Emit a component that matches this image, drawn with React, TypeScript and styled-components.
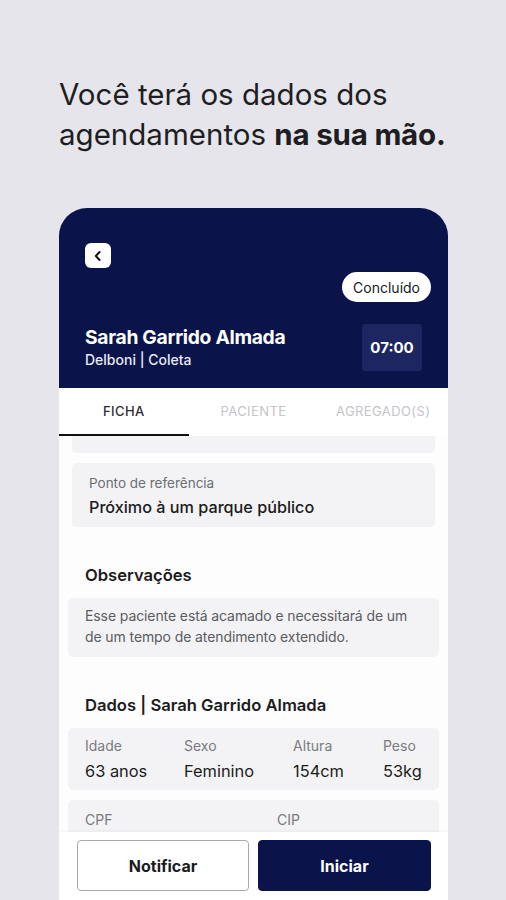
import React from "react";
import styled, { createGlobalStyle } from "styled-components";

const Global = createGlobalStyle`
  html, body { margin: 0; padding: 0; overflow: hidden; background: #e5e5eb; }
  body { font-family: Inter, "Noto Sans", Arial, sans-serif; -webkit-font-smoothing: antialiased; }
  * { box-sizing: border-box; }
`;

const Page = styled.div`
  width: 506px;
  height: 900px;
  background: #e5e5eb;
  padding: 74px 0 0 59px;
  overflow: hidden;
`;

const Headline = styled.h1`
  margin: 0;
  font-family: Inter, "Noto Sans", sans-serif;
  font-weight: 400;
  font-size: 29.5px;
  line-height: 40px;
  letter-spacing: 0px;
  color: #1e1e22;
  b { font-weight: 700; letter-spacing: -0.2px; }
`;

const Phone = styled.div`
  margin-top: 54px;
  width: 389px;
  height: 692px;
  border-radius: 28px 28px 0 0;
  background: #fdfdfd;
  overflow: hidden;
  display: flex;
  flex-direction: column;
`;

const Header = styled.div`
  height: 180px;
  flex: none;
  background: #0b144a;
  padding: 35px 17px 0 26px;
  display: flex;
  flex-direction: column;
`;

const BackButton = styled.div`
  width: 26px;
  height: 25px;
  border-radius: 6px;
  background: #fff;
  display: flex;
  align-items: center;
  justify-content: center;
`;

const StatusRow = styled.div`
  display: flex;
  justify-content: flex-end;
  margin-top: 4px;
`;

const Pill = styled.div`
  height: 30px;
  padding: 0 11px;
  border-radius: 15px;
  background: #fff;
  color: #1a1a24;
  font-size: 14px;
  display: flex;
  align-items: center;
`;

const InfoRow = styled.div`
  display: flex;
  align-items: center;
  justify-content: space-between;
  margin-top: 22px;
  padding-right: 9px;
`;

const Name = styled.div`
  color: #fff;
  font-weight: 700;
  font-size: 19.3px;
  letter-spacing: -0.3px;
  line-height: 22px;
`;

const Sub = styled.div`
  color: #e8e9f2;
  font-weight: 500;
  font-size: 14px;
  line-height: 20px;
  margin-top: 2px;
`;

const TimeBox = styled.div`
  width: 60px;
  height: 47px;
  border-radius: 3px;
  background: #1d2660;
  color: #fff;
  font-weight: 700;
  font-size: 15px;
  display: flex;
  align-items: center;
  justify-content: center;
`;

const Tabs = styled.div`
  height: 48px;
  flex: none;
  background: #fff;
  display: grid;
  grid-template-columns: repeat(3, 1fr);
`;

const Tab = styled.div<{ $active?: boolean }>`
  display: flex;
  align-items: center;
  justify-content: center;
  font-size: 13px;
  font-weight: ${(p) => (p.$active ? 500 : 400)};
  letter-spacing: 0.4px;
  color: ${(p) => (p.$active ? "#2d2d33" : "#c4c4c9")};
  border-bottom: 2px solid ${(p) => (p.$active ? "#111" : "transparent")};
`;

const Content = styled.div`
  flex: 1;
  min-height: 0;
  overflow: hidden;
  display: flex;
  flex-direction: column;
  & > * { flex: none; }
`;

const Box = styled.div<{ $inset: number }>`
  margin: 0 ${(p) => p.$inset}px;
  background: #f3f3f5;
  border-radius: 5px;
`;

const Stub = styled(Box)`
  height: 17px;
  border-radius: 0 0 5px 5px;
`;

const RefBox = styled(Box)`
  margin-top: 10px;
  height: 64px;
  padding: 11px 17px 0;
`;

const Label = styled.div`
  font-size: 13.5px;
  color: #6d6d74;
  line-height: 18px;
`;

const Value = styled.div`
  font-size: 16.2px;
  color: #1b1b20;
  line-height: 24px;
  margin-top: 3px;
  font-weight: 500;
`;

const SectionTitle = styled.div<{ $top: number }>`
  margin: ${(p) => p.$top}px 0 0 26px;
  font-weight: 600;
  font-size: 16.6px;
  line-height: 22px;
  color: #1b1b20;
`;

const ObsBox = styled(Box)`
  margin-top: 12px;
  height: 59px;
  padding: 7px 17px 0;
  font-size: 14px;
  line-height: 21px;
  color: #5b5b62;
  letter-spacing: -0.1px;
`;

const StatsBox = styled(Box)`
  margin-top: 12px;
  height: 62px;
  padding: 9px 17px 0;
  display: grid;
  grid-template-columns: 99px 109px 90px auto;
`;

const StatLabel = styled.div`
  font-size: 14px;
  color: #7a7a80;
  line-height: 18px;
`;

const StatValue = styled.div`
  font-size: 16.4px;
  color: #1b1b20;
  line-height: 22px;
  margin-top: 5px;
`;

const IdBox = styled(Box)`
  margin-top: 10px;
  height: 60px;
  padding: 11px 17px 0;
  display: grid;
  grid-template-columns: 192px auto;
`;

const Footer = styled.div`
  flex: none;
  height: 68px;
  background: #fff;
  padding: 8px 17px 0 18px;
  display: grid;
  grid-template-columns: 172px 173px;
  column-gap: 9px;
  align-items: start;
  box-shadow: 0 -1px 3px rgba(0, 0, 0, 0.04);
`;

const Button = styled.div<{ $primary?: boolean }>`
  height: 51px;
  border-radius: 4px;
  display: flex;
  align-items: center;
  justify-content: center;
  font-weight: 700;
  font-size: 16px;
  color: ${(p) => (p.$primary ? "#fff" : "#1a1a22")};
  background: ${(p) => (p.$primary ? "#0b144a" : "#fff")};
  border: 1px solid ${(p) => (p.$primary ? "#0b144a" : "#a9a9ae")};
`;

export default function App() {
  return (
    <Page>
      <Global />
      <Headline>
        Você terá os dados dos
        <br />
        agendamentos <b>na sua mão.</b>
      </Headline>
      <Phone>
        <Header>
          <BackButton>
            <svg width="14" height="14" viewBox="0 0 14 14">
              <path d="M8.6 3 L4.8 7 L8.6 11" fill="none" stroke="#111" strokeWidth="1.9" strokeLinecap="round" strokeLinejoin="round" />
            </svg>
          </BackButton>
          <StatusRow>
            <Pill>Concluído</Pill>
          </StatusRow>
          <InfoRow>
            <div>
              <Name>Sarah Garrido Almada</Name>
              <Sub>Delboni | Coleta</Sub>
            </div>
            <TimeBox>07:00</TimeBox>
          </InfoRow>
        </Header>
        <Tabs>
          <Tab $active>FICHA</Tab>
          <Tab>PACIENTE</Tab>
          <Tab>AGREGADO(S)</Tab>
        </Tabs>
        <Content>
          <Stub $inset={13} />
          <RefBox $inset={13}>
            <Label>Ponto de referência</Label>
            <Value>Próximo à um parque público</Value>
          </RefBox>
          <SectionTitle $top={37}>Observações</SectionTitle>
          <ObsBox $inset={9}>
            Esse paciente está acamado e necessitará de um
            <br />
            de um tempo de atendimento extendido.
          </ObsBox>
          <SectionTitle $top={37}>Dados | Sarah Garrido Almada</SectionTitle>
          <StatsBox $inset={9}>
            <div>
              <StatLabel>Idade</StatLabel>
              <StatValue>63 anos</StatValue>
            </div>
            <div>
              <StatLabel>Sexo</StatLabel>
              <StatValue>Feminino</StatValue>
            </div>
            <div>
              <StatLabel>Altura</StatLabel>
              <StatValue>154cm</StatValue>
            </div>
            <div>
              <StatLabel>Peso</StatLabel>
              <StatValue>53kg</StatValue>
            </div>
          </StatsBox>
          <IdBox $inset={9}>
            <StatLabel>CPF</StatLabel>
            <StatLabel>CIP</StatLabel>
          </IdBox>
        </Content>
        <Footer>
          <Button>Notificar</Button>
          <Button $primary>Iniciar</Button>
        </Footer>
      </Phone>
    </Page>
  );
}
